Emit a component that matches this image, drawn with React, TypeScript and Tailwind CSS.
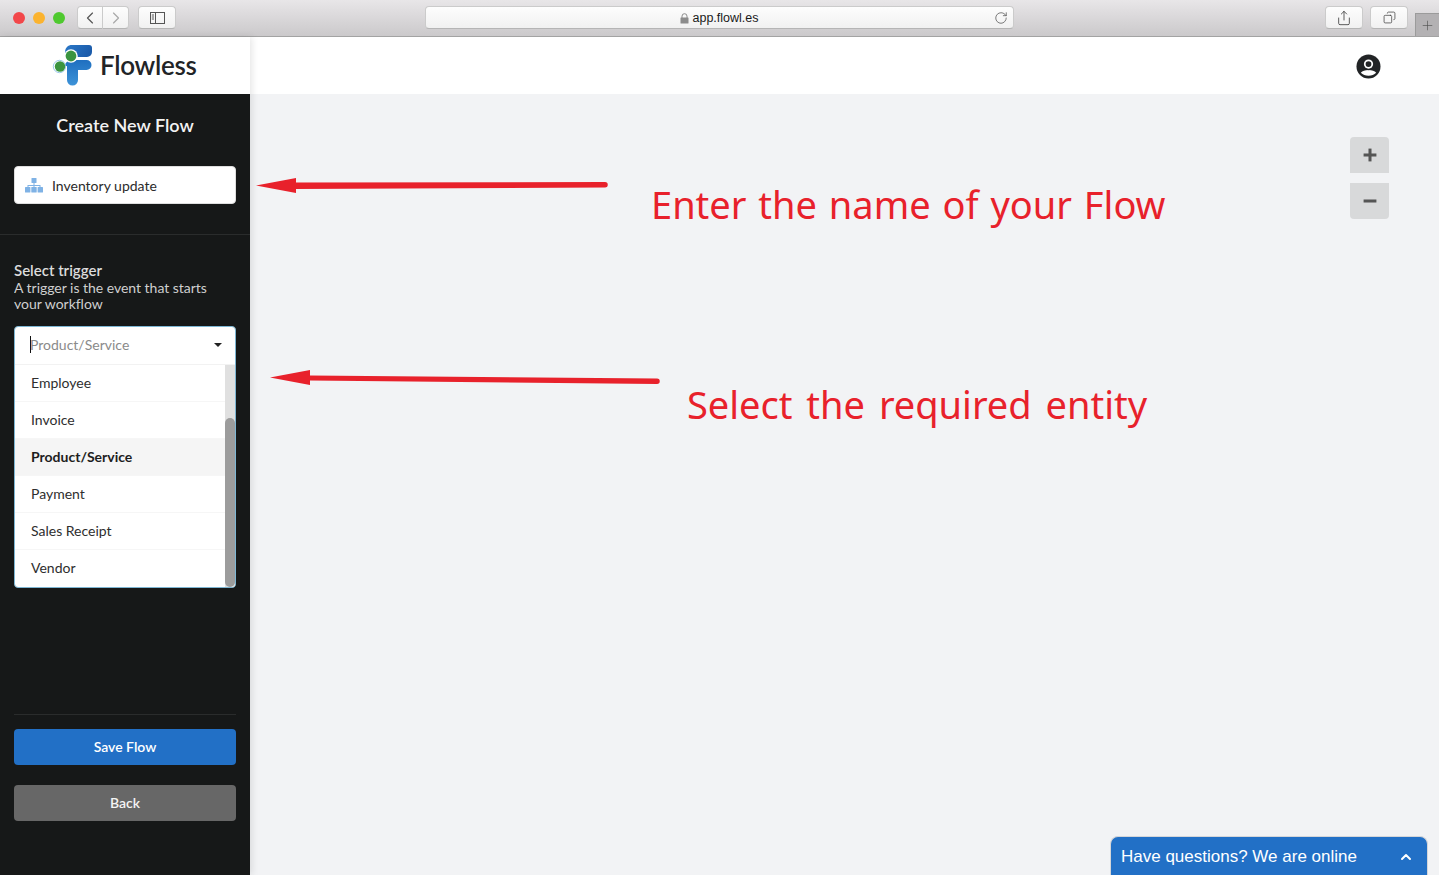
import React from "react";
import { Plus, Minus, ChevronUp, ChevronLeft, ChevronRight, RotateCw, Share, Copy } from "lucide-react";

const options = ["Employee", "Invoice", "Product/Service", "Payment", "Sales Receipt", "Vendor"];

function Logo() {
  return (
    <svg width="42" height="42" viewBox="0 0 42 42">
      <defs>
        <linearGradient id="flowTop" x1="0" y1="0" x2="1" y2="0.3">
          <stop offset="0" stopColor="#2a78c8" />
          <stop offset="1" stopColor="#1c5cab" />
        </linearGradient>
        <linearGradient id="flowStem" x1="0" y1="0" x2="0" y2="1">
          <stop offset="0" stopColor="#1f6fc0" />
          <stop offset="1" stopColor="#3d93d8" />
        </linearGradient>
      </defs>
      <path d="M13 8.500C13 3.500 16 1 20 1h17a3 3 0 0 1 3 3v4a5 5 0 0 1-5 5H13z" fill="url(#flowTop)" />
      <path d="M13 22c0-3 3-6 6-6h15.500a4.500 4.500 0 0 1 0 10H26v10a5.500 5.500 0 0 1-11 0V22z" fill="url(#flowStem)" />
      <circle cx="19" cy="12" r="6.800" fill="#ffffff" />
      <circle cx="19" cy="12" r="5.400" fill="#3b9440" />
      <circle cx="7.500" cy="22.500" r="6.200" fill="#ffffff" stroke="#5aa6dd" strokeWidth="0.600" />
      <circle cx="8" cy="22.500" r="5.200" fill="#3b9440" />
    </svg>
  );
}

function ChromeButton({ className, children }: { className: string; children: React.ReactNode }) {
  return (
    <div className={`h-[23px] flex items-center justify-center bg-gradient-to-b from-[#fdfdfd] to-[#f1f1f1] border border-[#cbcbcb] border-b-[#b5b5b5] ${className}`}>
      {children}
    </div>
  );
}

function BrowserBar() {
  return (
    <div className="h-[37px] shrink-0 flex items-start pt-[6px] bg-gradient-to-b from-[#e8e6e8] to-[#cbc9cb] border-b border-[#a3a3a3] relative">
      <div className="flex items-center gap-[8px] pl-[13px] pt-[6px]">
        <span className="w-[12px] h-[12px] rounded-full bg-[#f2474a]" />
        <span className="w-[12px] h-[12px] rounded-full bg-[#fbb32f]" />
        <span className="w-[12px] h-[12px] rounded-full bg-[#4fc92f]" />
      </div>
      <div className="flex ml-[12px]">
        <ChromeButton className="w-[26px] rounded-l-[4px]">
          <ChevronLeft size={20} strokeWidth={1.4} className="text-[#555555]" />
        </ChromeButton>
        <ChromeButton className="w-[26px] rounded-r-[4px] border-l-0">
          <ChevronRight size={20} strokeWidth={1.4} className="text-[#a8a8a8]" />
        </ChromeButton>
      </div>
      <ChromeButton className="w-[38px] rounded-[4px] ml-[9px]">
        <svg width="15" height="12" viewBox="0 0 15 12" fill="none" stroke="#555555" strokeWidth="1">
          <rect x="0.500" y="0.500" width="14" height="11" />
          <path d="M5.500 0.500v11M1.800 3h2.200M1.800 5h2.200M1.800 7h2.200" />
        </svg>
      </ChromeButton>
      <ChromeButton className="w-[589px] rounded-[4px] ml-[249px] relative">
        <span className="flex items-center gap-[3px] pt-[1px] text-[12.500px] text-[#1a1a1a] [font-family:'Liberation_Sans',sans-serif]">
          <svg width="9" height="11" viewBox="0 0 9 11">
            <path d="M2 5V3.200a2.500 2.500 0 0 1 5 0V5" fill="none" stroke="#8c8c8c" strokeWidth="1" />
            <rect x="0.500" y="4.500" width="8" height="6" rx="0.500" fill="#8c8c8c" />
          </svg>
          app.flowl.es
        </span>
        <RotateCw size={14} strokeWidth={1.3} className="absolute right-[5px] top-[4px] text-[#555555]" />
      </ChromeButton>
      <div className="flex gap-[7px] ml-[311px]">
        <ChromeButton className="w-[38px] rounded-[4px]">
          <Share size={16} strokeWidth={1.3} className="text-[#444444]" />
        </ChromeButton>
        <ChromeButton className="w-[38px] rounded-[4px]">
          <Copy size={13} strokeWidth={1.4} className="text-[#444444] -scale-x-100" />
        </ChromeButton>
      </div>
      <div className="absolute right-0 top-[13px] w-[24px] h-[23px] bg-[#b3b1b3] border-l border-t border-[#9b9b9b] flex items-center justify-center">
        <Plus size={15} strokeWidth={1} className="text-[#4d4d4d]" />
      </div>
    </div>
  );
}

function Sidebar() {
  return (
    <aside className="w-[250px] shrink-0 flex flex-col z-10 shadow-[2px_0_7px_rgba(0,0,0,0.1)] [font-family:Lato,sans-serif]">
      <div className="h-[57px] bg-white flex items-center pl-[52px] gap-[6px]">
        <span className="-mt-[2px] flex">
          <Logo />
        </span>
        <span className="text-[26px] font-semibold text-[#222427] tracking-[-0.3px]">Flowless</span>
      </div>
      <div className="flex-1 bg-[#161818] flex flex-col">
        <div className="h-[141px] flex flex-col items-center border-b border-[#2a2c2c] px-[14px]">
          <h1 className="text-[18px] leading-[24px] mt-[19px] font-semibold text-[#f2f2f2]">Create New Flow</h1>
          <div className="mt-[29px] w-full h-[38px] bg-white rounded-[4px] border border-[#dedede] flex items-center pl-[10px] gap-[9px]">
            <svg width="18" height="15" viewBox="0 0 18 15" fill="#7fb2e5">
              <rect x="6.500" y="0" width="5" height="5" rx="0.500" />
              <rect x="0" y="9" width="5.400" height="5.500" rx="0.500" />
              <rect x="6.300" y="9" width="5.400" height="5.500" rx="0.500" />
              <rect x="12.600" y="9" width="5.400" height="5.500" rx="0.500" />
              <path d="M8.500 5h1v2h6v2h-1V8H9.500v1h-1V8H3.500v1h-1V7h6z" />
            </svg>
            <span className="text-[14px] text-[#2b2b2b]">Inventory update</span>
          </div>
        </div>
        <div className="px-[14px] pt-[27px]">
          <div className="text-[15px] leading-[16px] font-semibold text-[#dcdcdc]">Select trigger</div>
          <div className="mt-[2px] text-[14px] leading-[16px] tracking-[-0.02px] text-[#cfcfcf] h-[29px] w-[210px] overflow-hidden">
            A trigger is the event that starts your workflow
          </div>
          <div className="mt-[17px] h-[262px] bg-white rounded-[4px] border border-[#7db6d3] flex flex-col overflow-hidden">
            <div className="h-[38px] shrink-0 flex items-center border-b border-[#f2f2f2] pb-[2px] pl-[15px] pr-[13px]">
              <span className="w-px h-[17px] bg-[#111111] -mr-px" />
              <span className="flex-1 text-[14px] text-[#8a8a8a]">Product/Service</span>
              <span className="w-0 h-0 border-x-[4px] border-x-transparent border-t-[4px] border-t-[#222222]" />
            </div>
            <div className="flex flex-1 min-h-0">
              <ul className="flex-1">
                {options.map((name) => (
                  <li
                    key={name}
                    className={`h-[37px] flex items-center pb-[2px] pl-[16px] text-[14px] border-b border-[#f6f6f6] last:border-b-0 ${
                      name === "Product/Service" ? "font-bold text-[#1d1d1d] bg-[#f5f5f5]" : "text-[#2e2e2e]"
                    }`}
                  >
                    {name}
                  </li>
                ))}
              </ul>
              <div className="w-[10px] bg-[#e0e0e0] pt-[53px]">
                <div className="h-full bg-[#9c9c9c] rounded-[5px]" />
              </div>
            </div>
          </div>
        </div>
        <div className="mt-auto mx-[14px] mb-[54px] border-t border-[#2a2c2c] pt-[14px] flex flex-col gap-[20px]">
          <button className="h-[36px] pb-[2px] rounded-[4px] bg-[#2270c6] text-white text-[14px] font-semibold">Save Flow</button>
          <button className="h-[36px] pb-[2px] rounded-[4px] bg-[#676767] text-[#f4f4f4] text-[14px] font-semibold">Back</button>
        </div>
      </div>
    </aside>
  );
}

function Annotations() {
  return (
    <>
      <svg className="absolute left-0 top-0 pointer-events-none" width="700" height="400" viewBox="250 94 700 400">
        <path d="M256 185.500L296 178V182.500L605 182a2.500 2.500 0 0 1 0 5.500L296 189V193z" fill="#e8212b" />
        <path d="M270 377.500L310 370V375.500L657 378.500a2.500 2.500 0 0 1 0 5.500L310 380.500V385z" fill="#e8212b" />
      </svg>
      <div className="absolute left-[401px] top-[85px] text-[38px] leading-[50px] [word-spacing:2px] text-[#e8212b] whitespace-nowrap [font-family:'Noto_Sans',sans-serif]">
        Enter the name of your Flow
      </div>
      <div className="absolute left-[437px] top-[285px] text-[38px] leading-[50px] [word-spacing:4px] text-[#e8212b] whitespace-nowrap [font-family:'Noto_Sans',sans-serif]">
        Select the required entity
      </div>
    </>
  );
}

export default function App() {
  return (
    <div className="w-[1439px] h-[875px] flex flex-col overflow-hidden bg-[#f2f3f5]">
      <BrowserBar />
      <div className="flex flex-1 min-h-0">
        <Sidebar />
        <main className="flex-1 flex flex-col">
          <header className="h-[57px] bg-white flex items-center justify-end pr-[58px]">
            <svg width="25" height="25" viewBox="0 0 26 26" className="mt-[1px]">
              <circle cx="13" cy="13" r="12.500" fill="#222426" />
              <path d="M5 19.500a9 5.500 0 0 1 16 0a10.500 9 0 0 1-16 0z" fill="#ffffff" />
              <circle cx="13" cy="10.500" r="6.500" fill="#222426" />
              <circle cx="13" cy="10.500" r="4.800" fill="#ffffff" />
              <circle cx="13" cy="10.500" r="3" fill="#222426" />
            </svg>
          </header>
          <div className="flex-1 relative">
            <div className="flex flex-col items-end pt-[43px] pr-[50px] gap-[10px]">
              <div className="w-[39px] h-[36px] bg-[#d8d9da] rounded-t-[4px] flex items-center justify-center">
                <Plus size={22} strokeWidth={3.3} strokeLinecap="butt" className="text-[#555555]" />
              </div>
              <div className="w-[39px] h-[36px] bg-[#d8d9da] rounded-b-[4px] flex items-center justify-center">
                <Minus size={22} strokeWidth={3.3} strokeLinecap="butt" className="text-[#555555]" />
              </div>
            </div>
            <Annotations />
            <div className="absolute right-[11px] bottom-0 w-[318px] h-[39px] pt-[1px] bg-[#2270c6] rounded-t-[8px] border border-b-0 border-[#d5d6d9] flex items-center justify-between pl-[10px] pr-[13px] text-white text-[17px] [font-family:'Liberation_Sans',sans-serif]">
              <span>Have questions? We are online</span>
              <ChevronUp size={16} strokeWidth={3} />
            </div>
          </div>
        </main>
      </div>
    </div>
  );
}
